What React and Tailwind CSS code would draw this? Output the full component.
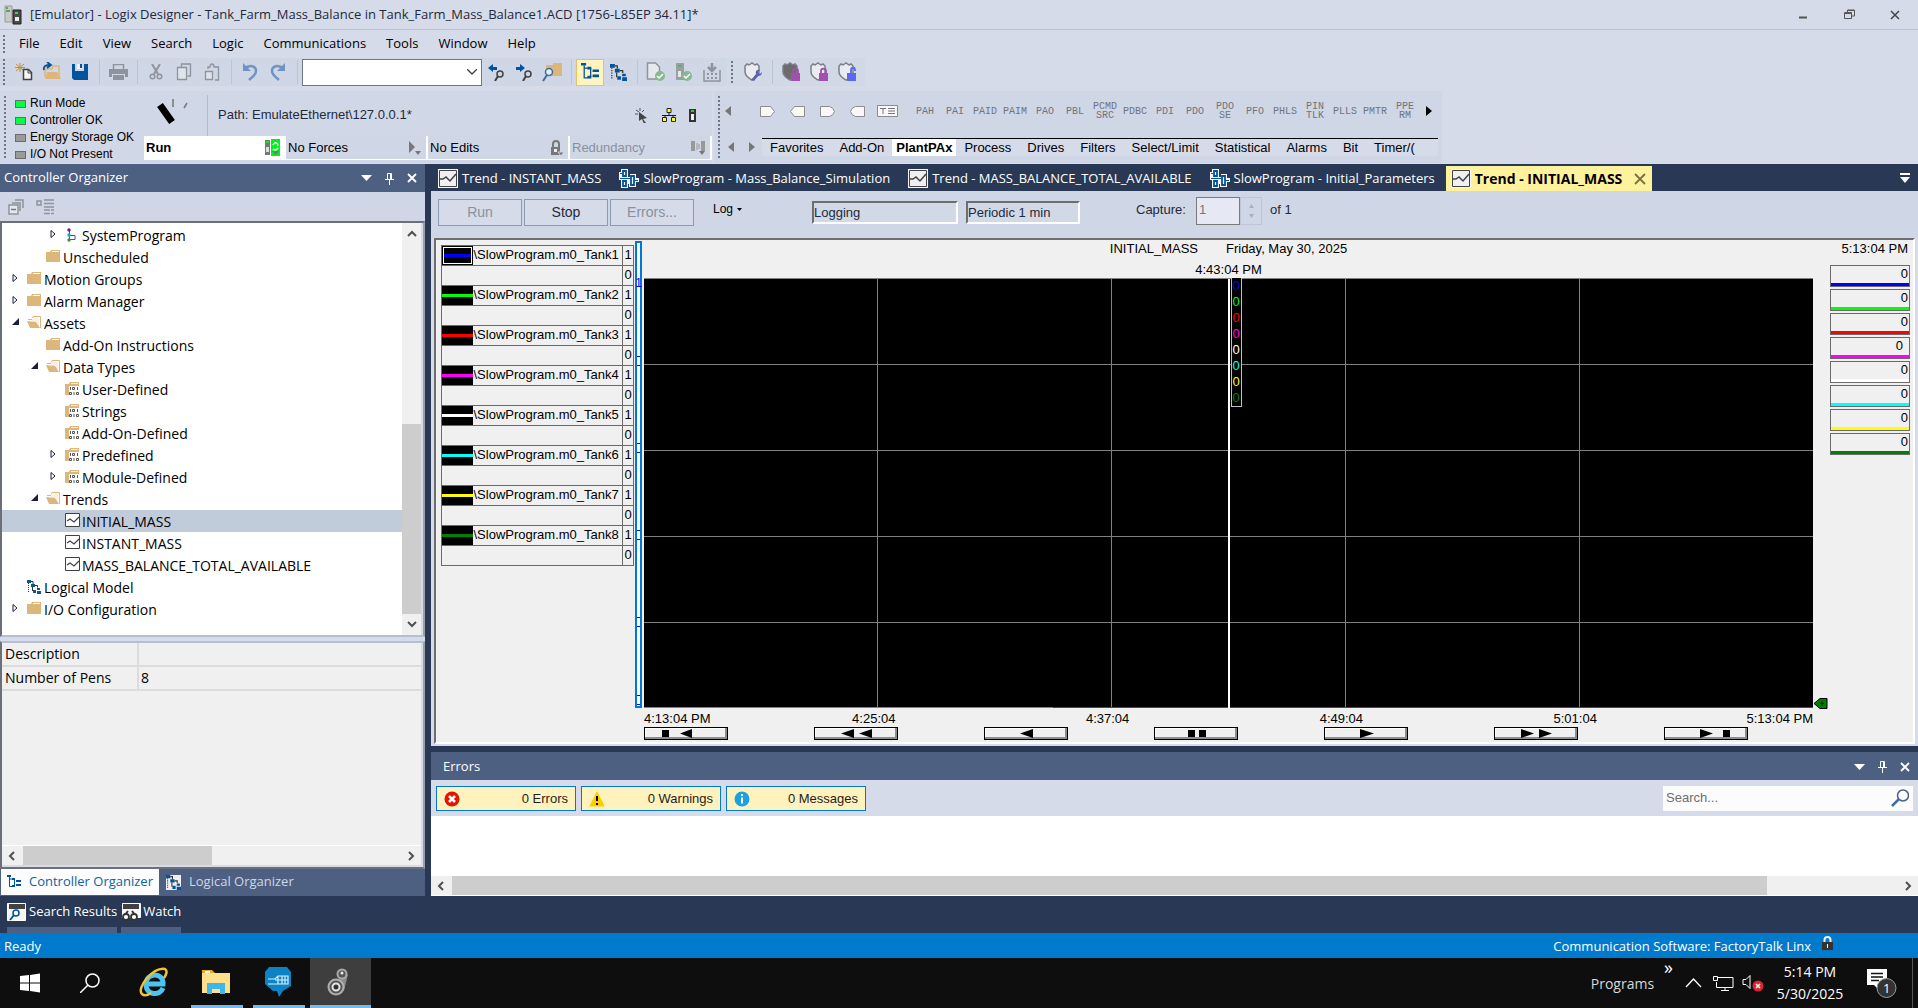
import React, { useState } from "react";
import clsx from "clsx";

const UI = "font-['Open_Sans',sans-serif]";
const ARIAL = "font-['Liberation_Sans',sans-serif]";

const PENS = [
  { color: "#0000ff", name: "Tank1" },
  { color: "#00ff00", name: "Tank2" },
  { color: "#ff0000", name: "Tank3" },
  { color: "#ff00ff", name: "Tank4" },
  { color: "#ffffff", name: "Tank5" },
  { color: "#00ffff", name: "Tank6" },
  { color: "#ffff00", name: "Tank7" },
  { color: "#008000", name: "Tank8" },
];

const TREE = [
  { level: 3, arrow: "closed", icon: "program", label: "SystemProgram" },
  { level: 2, icon: "folder", label: "Unscheduled" },
  { level: 1, arrow: "closed", icon: "folder", label: "Motion Groups" },
  { level: 1, arrow: "closed", icon: "folder", label: "Alarm Manager" },
  { level: 1, arrow: "open", icon: "open", label: "Assets" },
  { level: 2, icon: "folder", label: "Add-On Instructions" },
  { level: 2, arrow: "open", icon: "open", label: "Data Types" },
  { level: 3, icon: "types", label: "User-Defined" },
  { level: 3, icon: "types", label: "Strings" },
  { level: 3, icon: "types", label: "Add-On-Defined" },
  { level: 3, arrow: "closed", icon: "types", label: "Predefined" },
  { level: 3, arrow: "closed", icon: "types", label: "Module-Defined" },
  { level: 2, arrow: "open", icon: "open", label: "Trends" },
  { level: 3, icon: "trend", label: "INITIAL_MASS" },
  { level: 3, icon: "trend", label: "INSTANT_MASS" },
  { level: 3, icon: "trend", label: "MASS_BALANCE_TOTAL_AVAILABLE" },
  { level: 1, icon: "model", label: "Logical Model" },
  { level: 1, arrow: "closed", icon: "folder", label: "I/O Configuration" },
];

const INDENT = { 1: "pl-[7px]", 2: "pl-[26px]", 3: "pl-[45px]" };

const Ico = ({ w = 18, h = w, box = `0 0 ${w} ${h}`, className, children }) => (
  <svg
    width={w}
    height={h}
    viewBox={box}
    fill="none"
    aria-hidden="true"
    className={clsx("shrink-0", className)}
  >
    {children}
  </svg>
);

/* ---------- tree and tab icons ---------- */

const FolderIcon = () => (
  <Ico w={14} h={13}>
    <path d="M0 2h4l1-2h9v12H0z" fill="#dcb67a" />
    <path d="M6 1.500h7" stroke="#fff" />
  </Ico>
);

const OpenFolderIcon = () => (
  <Ico w={14} h={13}>
    <path d="M1 3.500h4l1-3h7.500V12" stroke="#dcb67a" />
    <path d="M5 2h7v9l-3-5H5z" fill="#f5f0e8" />
    <path d="M0 5l9 1 4 6H3z" fill="#dcb67a" />
  </Ico>
);

const TypesIcon = () => (
  <Ico w={14} h={14}>
    <path d="M0 2h4l1-2h9v4H4v9H0z" fill="#dcb67a" />
    <path d="M6 1.500h7" stroke="#f5ead6" />
    <path
      d="M5.500 5v3M7.500 5.500h2v2h-2zM12.500 5v3M4.500 10.500h2v2h-2zM9 10v3M11.500 10.500h2v2h-2z"
      stroke="#555"
      strokeWidth="1"
    />
  </Ico>
);

const TrendIcon = ({ size = 15 }) => (
  <Ico w={size} h={size} box="0 0 15 15">
    <path d="M.5.5h14v13H.5z" fill="#fff" stroke="#424242" />
    <path d="M2 8l3-2 4 3 5-5" stroke="#424242" strokeWidth="1.200" />
  </Ico>
);

const TabTrendIcon = () => (
  <Ico w={20} h={20}>
    <path d="M0 0h20v19H0z" fill="#f6f6f6" />
    <path d="M1.500 1.500h17v16h-17z" fill="#f0eff1" stroke="#424242" />
    <path d="M2 10h3l3-2 4 4 6-7" stroke="#424242" strokeWidth="1.500" />
  </Ico>
);

const ModelIcon = ({ c = "#0b5a7c", w = 14 }) => (
  <Ico w={w} h={w} box="0 0 14 14">
    <path d="M0 0h4v3H0zM4 4h4v3H4zM6 10h3v3H6zM10 8h3v2h-3zM10 11h4v3h-4z" fill={c} />
    <path d="M1.500 3v10" stroke="#333" strokeDasharray="1 1" />
    <path d="M4 1.500h2V4M8 5.500h2.500v2M5.500 7v4" stroke="#333" />
  </Ico>
);

const OrganizerIcon = ({ w = 14 }) => (
  <Ico w={w} h={w} box="0 0 14 14">
    <path d="M0 0h4v2H0zM5 3h3v2H5zM5 10h3v2H5zM9 5h5v2H9zM9 9h5v2H9z" fill="#00539c" />
    <path d="M2.500 2v9.500h3M2.500 4h3M7.500 4v7" stroke="#00539c" />
  </Ico>
);

const ProgramIcon = () => (
  <Ico w={14} h={14}>
    <path d="M4.500 2v10M5 7.500h5v4H5" stroke="#555" />
    <circle cx="4" cy="2" r="1.700" fill="#68217a" />
    <circle cx="4" cy="7" r="1.700" fill="#1ba1e2" />
    <circle cx="4" cy="12" r="1.700" fill="#339933" />
  </Ico>
);

const RoutineIcon = () => (
  <Ico w={20} h={20}>
    <path d="M0 3h2V0h7v8h2V5h6v4h3v4h-3v5h-7v-3H9v4H2v-8H0z" fill="#f6f6f6" />
    <path d="M4 2h3v5H4zM4 12h3v5H4zM12 7h3v9h-3z" fill="#fff" stroke="#00539c" strokeWidth="1.800" />
    <path d="M1 4.500h2M1 9.500h10M16 11.500h3" stroke="#00539c" />
  </Ico>
);

const TREE_ICONS = {
  program: <ProgramIcon />,
  folder: <FolderIcon />,
  open: <OpenFolderIcon />,
  types: <TypesIcon />,
  trend: <TrendIcon />,
  model: <ModelIcon />,
};

/* ---------- small shared parts ---------- */

const Grip = ({ className }) => (
  <div
    className={clsx(
      "w-[5px] shrink-0 bg-[radial-gradient(#6b7489_1px,transparent_1px)] bg-[size:4px_4px]",
      className
    )}
  />
);

const Sep = () => <div className="ml-[5px] mr-1 h-6 w-px shrink-0 bg-[#bcc4d4]" />;

const IconButton = ({ label, active, children }) => (
  <button
    type="button"
    aria-label={label}
    className={clsx(
      "flex h-[27px] w-7 shrink-0 items-center justify-center",
      active && "border border-[#e5c365] bg-[#fdf4bf]"
    )}
  >
    {children}
  </button>
);

const PanelButtons = () => (
  <div className="flex items-center gap-[3px]">
    <button type="button" aria-label="Window position" className="flex w-5 justify-center">
      <Ico w={11} h={6}>
        <path d="M0 0h11L5.500 6z" fill="#fff" />
      </Ico>
    </button>
    <button type="button" aria-label="Auto hide" className="flex w-5 justify-center">
      <Ico w={9} h={13}>
        <path d="M2.500 1.500h4v6h-4zM0 7.500h9M4.500 8v5M5.500 2v5" stroke="#fff" />
      </Ico>
    </button>
    <button type="button" aria-label="Close" className="flex w-5 justify-center">
      <Ico w={10} h={10}>
        <path d="M1 1l8 8M9 1L1 9" stroke="#fff" strokeWidth="1.800" />
      </Ico>
    </button>
  </div>
);

const Chevron = ({ d }) => (
  <Ico w={10} h={10}>
    <path d={d} stroke="#505050" strokeWidth="2" />
  </Ico>
);

const UP = "M1 7l4-4 4 4";
const DOWN = "M1 3l4 4 4-4";
const LEFT = "M7 1L3 5l4 4";
const RIGHT = "M3 1l4 4-4 4";

/* ---------- top bars ---------- */

const TitleBar = () => (
  <header className={clsx(UI, "flex h-[30px] items-center border-b border-[#bcc3d2] pl-1 text-[13px] text-[#1e2a3c]")}>
    <Ico w={18} h={20}>
      <path d="M1 1h7v16H1z" fill="#c8c8c8" stroke="#9a9a9a" />
      <path d="M2 3h2M2 6h4" stroke="#5aa85a" strokeWidth="2" />
      <path d="M9 5h8v14H9z" fill="#4a4a4a" stroke="#222" />
      <path d="M11 8h3" stroke="#2fe02f" strokeWidth="2" />
      <path d="M11 12h4v4h-4z" fill="#eee" />
    </Ico>
    <h1 className="ml-2 flex-1 whitespace-pre">
      [Emulator] - Logix Designer - Tank_Farm_Mass_Balance in Tank_Farm_Mass_Balance1.ACD [1756-L85EP 34.11]*
    </h1>
    <button type="button" aria-label="Minimize" className="flex w-[46px] justify-center">
      <Ico w={10} h={10}><path d="M1 7.500h8" stroke="#555" strokeWidth="2" /></Ico>
    </button>
    <button type="button" aria-label="Restore" className="flex w-[46px] justify-center">
      <Ico w={11} h={11}><path d="M.5 3.500h7v6h-7zM3.500 3V1h7v6H8M3 1.500h8M1 4.500h7" stroke="#555" /></Ico>
    </button>
    <button type="button" aria-label="Close" className="flex w-[46px] justify-center">
      <Ico w={10} h={10}><path d="M1 1l8 8M9 1L1 9" stroke="#444" strokeWidth="1.500" /></Ico>
    </button>
  </header>
);

const MENUS = ["File", "Edit", "View", "Search", "Logic", "Communications", "Tools", "Window", "Help"];

const MenuBar = () => (
  <nav className={clsx(UI, "flex h-7 items-center text-[13px] text-black")}>
    <Grip className="mx-[2px] h-5" />
    {MENUS.map((m) => (
      <button key={m} type="button" className="px-[10px]">
        {m}
      </button>
    ))}
  </nav>
);

const GREY = "#8f949c";

const Shield = ({ fill = "#e9ebf0", children }) => (
  <Ico w={20} h={20}>
    <path
      d="M2 4l2-2 2 1 3-2 3 2 2-1 2 2v6c0 4-4 6-7 8-3-2-7-4-7-8z"
      fill={fill}
      stroke="#7b7f88"
      strokeWidth="1.500"
    />
    {children}
  </Ico>
);

const Lock = ({ c, open }) => (
  <g>
    <path d="M10 11h9v8h-9z" fill={c} />
    <path d={open ? "M14 11V8c0-3 4-3 4 0v1" : "M12 11V9c0-3 5-3 5 0v2"} stroke={c} strokeWidth="1.800" />
  </g>
);

const ToolBar = () => (
  <div className="flex h-7 items-center">
    <div className="flex h-7 items-center bg-[#cfd6e5]">
      <Grip className="ml-[2px] mr-[3px] h-7" />
      <IconButton label="New">
        <Ico>
          <path d="M5 0v9M1 1l8 7M9 1L1 8M0 4.500h10" stroke="#c98b2b" />
          <path d="M8.500 6.500h5l3 3v7h-8z" fill="#f6f6f6" stroke="#424242" strokeWidth="1.500" />
          <path d="M13 6v4h4" stroke="#424242" />
        </Ico>
      </IconButton>
      <IconButton label="Open">
        <Ico w={20}>
          <path d="M3 15V7h7l1-3h6v12" stroke="#dcb67a" strokeWidth="1.500" />
          <path d="M5 10h10l4 7H3z" fill="#dcb67a" />
          <path d="M2 8c-1-4 2-5 6-5M5 0l4 3-4 3" stroke="#00539c" strokeWidth="1.800" />
        </Ico>
      </IconButton>
      <IconButton label="Save">
        <Ico w={16}>
          <path d="M0 0h3v7h9V0h4v16H2l-2-2z" fill="#00539c" />
          <path d="M5 0h5v5H5z" fill="#f0eff1" />
          <path d="M8 0h2v4H8z" fill="#00539c" />
        </Ico>
      </IconButton>
      <Sep />
      <IconButton label="Print">
        <Ico w={19} h={16}>
          <path d="M4.500 5V.5h10V5" stroke={GREY} strokeWidth="1.500" />
          <path d="M0 5h19v8h-3v-3H3v3H0z" fill={GREY} />
          <path d="M4 11h11v5H4z" fill={GREY} />
        </Ico>
      </IconButton>
      <Sep />
      <IconButton label="Cut">
        <Ico w={14} h={16}>
          <path d="M3 0l6 10M11 0L5 10" stroke={GREY} strokeWidth="2" />
          <circle cx="3.500" cy="12.500" r="2.300" stroke={GREY} strokeWidth="1.500" />
          <circle cx="10.500" cy="12.500" r="2.300" stroke={GREY} strokeWidth="1.500" />
        </Ico>
      </IconButton>
      <IconButton label="Copy">
        <Ico w={16} h={18}>
          <path d="M5.500 4V1h9v12h-3" stroke={GREY} strokeWidth="1.300" />
          <path d="M1.500 4.500h9v12h-9z" fill="#dfe3ea" stroke={GREY} strokeWidth="1.300" />
        </Ico>
      </IconButton>
      <IconButton label="Paste">
        <Ico w={16} h={18}>
          <path d="M4 6V4h2c0-4 4-4 4 0h4.500v13H11" stroke={GREY} strokeWidth="1.300" />
          <path d="M1.500 8.500h7v8h-7z" fill="#dfe3ea" stroke={GREY} strokeWidth="1.300" />
        </Ico>
      </IconButton>
      <Sep />
      <IconButton label="Undo">
        <Ico w={16} h={18}>
          <path d="M2 6c6-5 12-3 12 2 0 4-4 6-7 9" stroke="#6f93c4" strokeWidth="2.500" />
          <path d="M1 0v8h8z" fill="#6f93c4" />
        </Ico>
      </IconButton>
      <IconButton label="Redo">
        <Ico w={16} h={18}>
          <path d="M14 6C8 1 2 3 2 8c0 4 4 6 7 9" stroke="#6f93c4" strokeWidth="2.500" />
          <path d="M15 0v8H7z" fill="#6f93c4" />
        </Ico>
      </IconButton>
      <Sep />
      <div className="relative flex h-[27px] w-[180px] items-center border border-[#6f7787] bg-white">
        <select aria-label="Search for" className="h-full w-full appearance-none bg-transparent text-[13px] outline-none">
          <option></option>
        </select>
        <Ico w={10} h={6} className="pointer-events-none absolute right-1"><path d="M0 0l5 5 5-5" stroke="#444" strokeWidth="1.300" /></Ico>
      </div>
      <IconButton label="Find previous">
        <Ico w={17}>
          <path d="M0 4l5-4v3h4v3H5v2z" fill="#00539c" />
          <circle cx="12" cy="10" r="3" stroke="#424242" strokeWidth="1.500" />
          <path d="M10 12l-3 5" stroke="#424242" strokeWidth="2" />
        </Ico>
      </IconButton>
      <IconButton label="Find next">
        <Ico w={17}>
          <path d="M9 4L4 0v3H0v3h4v2z" fill="#00539c" />
          <circle cx="12" cy="10" r="3" stroke="#424242" strokeWidth="1.500" />
          <path d="M10 12l-3 5" stroke="#424242" strokeWidth="2" />
        </Ico>
      </IconButton>
      <IconButton label="Find in files">
        <Ico w={20} h={19}>
          <path d="M4 2h7V0h9v13H4z" fill="#dcb67a" />
          <circle cx="7" cy="9" r="3.500" fill="#e8eef6" stroke="#3a6ea5" strokeWidth="1.500" />
          <path d="M5 12l-4 6" stroke="#3a6ea5" strokeWidth="2" />
        </Ico>
      </IconButton>
      <Sep />
      <IconButton label="Controller organizer" active>
        <OrganizerIcon w={18} />
      </IconButton>
      <IconButton label="Logical organizer">
        <ModelIcon c="#00539c" w={17} />
      </IconButton>
      <Sep />
      <IconButton label="Verify routine">
        <Ico w={20}>
          <path d="M1.500 1h8l4 4v12h-12z" fill="#e6e8ec" stroke={GREY} strokeWidth="1.500" />
          <circle cx="14" cy="14" r="5" fill="#86b98e" />
          <path d="M11 14l2 2 4-4" stroke="#fff" strokeWidth="1.500" />
        </Ico>
      </IconButton>
      <IconButton label="Verify controller">
        <Ico w={20}>
          <path d="M2 1h8v17H2z" fill="#9a9fa6" />
          <path d="M4 4h4" stroke="#54b85c" strokeWidth="2" />
          <path d="M4 9h3v6H4z" fill="#e6e8ec" />
          <circle cx="13" cy="14" r="5" fill="#86b98e" />
          <path d="M10 14l2 2 4-4" stroke="#fff" strokeWidth="1.500" />
        </Ico>
      </IconButton>
      <IconButton label="Download">
        <Ico w={18} h={19}>
          <path d="M9 0v6M5 4l4 4 4-4" stroke={GREY} strokeWidth="2.500" />
          <path d="M1 7v11h16V7" stroke={GREY} strokeWidth="1.500" />
          <path d="M4 11h10M4 15h10" stroke={GREY} strokeWidth="2" strokeDasharray="2 2" />
        </Ico>
      </IconButton>
    </div>
    <div className="flex h-7 items-center bg-[#d1d8e6] pr-1">
      <Grip className="ml-1 mr-1 h-6" />
      <IconButton label="Security configuration">
        <Shield><path d="M8 18l5-6c-1-3 1-5 4-4l-2 2 2 2 2-2c0 3-2 4-4 4l-4 5z" fill="#5c62ad" /></Shield>
      </IconButton>
      <Sep />
      <IconButton label="Protect all">
        <Shield fill="#6b6b6b"><Lock c="#a24fb0" /></Shield>
      </IconButton>
      <IconButton label="Protect">
        <Shield><Lock c="#a24fb0" /></Shield>
      </IconButton>
      <IconButton label="Unlock">
        <Shield><Lock c="#5a68f0" open /></Shield>
      </IconButton>
    </div>
  </div>
);

const LEDS = [
  { on: true, label: "Run Mode" },
  { on: true, label: "Controller OK" },
  { on: false, label: "Energy Storage OK" },
  { on: false, label: "I/O Not Present" },
];

const StatusField = ({ label, bold, faded, children }) => (
  <button
    type="button"
    className={clsx(
      "flex h-6 flex-1 items-center justify-between border-r-2 border-b border-white pl-[2px] pr-1 text-left text-[13px]",
      bold ? "bg-white font-bold text-black" : "bg-[#cfd6e5]",
      faded ? "text-[#8a909c]" : "text-black"
    )}
  >
    {label}
    {children}
  </button>
);

const OnlineBar = () => (
  <div className={clsx(ARIAL, "flex w-[712px] shrink-0 bg-[#d0d7e6]")}>
    <Grip className="mx-[3px] my-1 self-stretch" />
    <ul className="flex w-[133px] flex-col pl-1 pt-1 text-[12px] leading-[17px] text-black">
      {LEDS.map((l) => (
        <li key={l.label} className="flex items-center gap-1 whitespace-nowrap">
          <span
            className={clsx(
              "h-2 w-[11px] border border-[#6b6b6b]",
              l.on ? "bg-[#00ff40]" : "bg-[#9a9a9a]"
            )}
          />
          {l.label}
        </li>
      ))}
    </ul>
    <div className="flex flex-1 flex-col justify-between pb-[3px]">
      <div className="flex h-[45px] items-end">
        <div className="flex h-[41px] w-16 items-start border-r border-[#b4bccb] pl-3 pt-1">
          <Ico w={36} h={28}>
            <path d="M4 6l12 17" stroke="#000" strokeWidth="7" />
            <path d="M17 0v8M31 4l-3 5" stroke="#777" strokeWidth="1.500" />
          </Ico>
        </div>
        <span className="ml-[10px] flex-1 text-[13px] leading-[42px] text-[#1e2a3c]">
          Path: EmulateEthernet\127.0.0.1*
        </span>
        <div className="flex h-[42px] w-[77px] items-center gap-[13px]">
          <button type="button" aria-label="Who active">
            <Ico w={14} h={15}>
              <path d="M5 0v3M1 2l3 2M9 2L7 4M0 6h3" stroke="#555" />
              <path d="M4 4l8 6-4 1 3 4-2 1-2-5-3 2z" fill="#444" />
            </Ico>
          </button>
          <button type="button" aria-label="RSWho">
            <Ico w={14} h={14}>
              <path d="M7 4v3M0 7.500h14M3 8v2M11 8v2" stroke="#0000c0" />
              <path d="M5 .5h4v4H5zM.5 9.500h4v4h-4zM9.500 9.500h4v4h-4z" fill="#ff0" stroke="#222" />
            </Ico>
          </button>
          <button type="button" aria-label="Controller">
            <Ico w={7} h={13}>
              <path d="M0 0h7v13H0z" fill="#333" />
              <path d="M2 2h3" stroke="#3c3" strokeWidth="2" />
              <path d="M2 5h3v6H2z" fill="#eee" />
            </Ico>
          </button>
        </div>
      </div>
      <div className="flex">
        <StatusField label="Run" bold>
          <Ico w={16} h={17}>
            <path d="M7 0h9v17H7z" fill="#00f020" />
            <path d="M1 1h5v15H1z" fill="#777" />
            <path d="M2 3h3" stroke="#2d2" strokeWidth="2" />
            <path d="M2 8h3v5H2z" fill="#ddd" />
            <path d="M9 6c2-4 5-2 5 1M14 9c-2 3-4 2-5 1" stroke="#fff" strokeWidth="1.500" />
            <path d="M8 12h7l-3 4z" fill="#777" />
          </Ico>
        </StatusField>
        <StatusField label="No Forces">
          <Ico w={14} h={14}>
            <path d="M1 0l6 6-6 6zM7 10h6l-3 4z" fill="#777" />
          </Ico>
        </StatusField>
        <StatusField label="No Edits">
          <Ico w={14} h={16}>
            <path d="M1 7h9v8H1z" fill="#777" />
            <path d="M3 7V4c0-4 6-4 6 0v3" stroke="#777" strokeWidth="2" />
            <path d="M4 9h3v3H4z" fill="#eee" />
            <path d="M8 12h6l-3 4z" fill="#777" stroke="#cfd6e5" />
          </Ico>
        </StatusField>
        <StatusField label="Redundancy" faded>
          <Ico w={16} h={14}>
            <path d="M1 0h4v10H1zM11 0h4v10h-4z" fill="#999" />
            <path d="M7 2v7M9 3v5" stroke="#999" />
            <path d="M9 10h6l-3 4z" fill="#777" />
          </Ico>
        </StatusField>
      </div>
    </div>
  </div>
);

const BLOCKS = [
  "PAH", "PAI", "PAID", "PAIM", "PAO", "PBL", "PCMD SRC", "PDBC", "PDI", "PDO",
  "PDO SE", "PFO", "PHLS", "PIN TLK", "PLLS", "PMTR", "PPE RM",
];

const GROUPS = [
  "Favorites", "Add-On", "PlantPAx", "Process", "Drives", "Filters",
  "Select/Limit", "Statistical", "Alarms", "Bit", "Timer/(",
];

const SHAPES = [
  "M1.500 2.500h10l4 5-4 5h-10z",
  "M15.500 2.500h-10l-4 5 4 5h10z",
  "M1.500 2.500h9q4 1 5 5-1 4-5 5h-9z",
  "M15.500 2.500h-9q-4 1-5 5 1 4 5 5h9z",
];

const Triangle = ({ left, c = "#777" }) => (
  <Ico w={6} h={10}>
    <path d={left ? "M6 0v10L0 5z" : "M0 0v10l6-5z"} fill={c} />
  </Ico>
);

const InstructionBar = () => {
  const [group, setGroup] = useState("PlantPAx");

  return (
    <div className={clsx(ARIAL, "flex w-[728px] shrink-0 bg-[#cfd6e5]")}>
      <Grip className="my-1 ml-[3px] mr-[2px] self-stretch" />
      <div className="flex min-w-0 flex-1 flex-col pr-1">
        <div className="flex h-10 items-center">
          <button type="button" aria-label="Scroll left" className="w-7 shrink-0 pl-px"><Triangle left /></button>
          {SHAPES.map((d) => (
            <button key={d} type="button" aria-label="Reference" className="flex w-[30px] shrink-0 justify-center">
              <Ico w={17} h={15}>
                <path d={d} fill="#f8f8f8" stroke="#8c8c8c" />
              </Ico>
            </button>
          ))}
          <button type="button" aria-label="Text box" className="mr-2 flex w-[30px] shrink-0 justify-center">
            <Ico w={21} h={14}>
              <path d="M.5 1.500h20v11H.5z" fill="#f8f8f8" stroke="#8c8c8c" />
              <path d="M3 4.500h6M6 4v6M11 4.500h7M11 7h7M11 9.500h7" stroke="#777" />
            </Ico>
          </button>
          {BLOCKS.map((b) => (
            <button
              key={b}
              type="button"
              className="w-[30px] shrink-0 text-center font-['Liberation_Mono',monospace] text-[10px] leading-[9px] text-[#6f747d]"
            >
              {b}
            </button>
          ))}
          <button type="button" aria-label="Scroll right" className="pl-[6px]"><Triangle c="#000" /></button>
        </div>
        <div className="mt-[7px] flex h-[18px] items-center">
          <button type="button" aria-label="Previous group" className="pl-1"><Triangle left /></button>
          <button type="button" aria-label="Next group" className="pl-[15px] pr-[7px]"><Triangle /></button>
          <div role="tablist" className="flex h-full flex-1 border-t border-black bg-[#d5dbe9]">
            {GROUPS.map((g) => (
              <button
                key={g}
                type="button"
                role="tab"
                aria-selected={g === group}
                onClick={() => setGroup(g)}
                className={clsx(
                  "whitespace-nowrap text-[13px] leading-[17px] text-black",
                  g === group ? "bg-white px-1 font-bold" : "px-2 last:pr-0"
                )}
              >
                {g}
              </button>
            ))}
          </div>
        </div>
      </div>
    </div>
  );
};

/* ---------- left panel ---------- */

const Organizer = () => {
  const [selected, setSelected] = useState("INITIAL_MASS");

  return (
    <aside className={clsx(UI, "flex w-[425px] shrink-0 flex-col bg-[#d5dbe9]")}>
      <div className="flex h-7 shrink-0 items-center justify-between bg-[#4d6082] pl-1 pr-[3px] text-[13px] text-white">
        <h2>Controller Organizer</h2>
        <PanelButtons />
      </div>
      <div className="flex h-[29px] shrink-0 items-center gap-3 bg-[#cfd6e5] pl-2">
        <button type="button" aria-label="Collapse all">
          <Ico w={16}>
            <path d="M1 6h9v9H1z" fill="#e6e8ec" stroke="#8f949c" strokeWidth="1.500" />
            <path d="M3 10.500h5" stroke="#5c7ca8" strokeWidth="1.500" />
            <path d="M4 4h8v8M7 1h8v8" stroke="#8f949c" strokeWidth="1.500" />
          </Ico>
        </button>
        <button type="button" aria-label="Properties">
          <Ico w={18} h={16}>
            <path d="M1 2h4v4H1z" stroke="#8f949c" strokeWidth="1.500" />
            <path d="M8 1h10M8 4.500h10M8 8h10M8 11h6M8 14.500h6M15 11h3M15 14.500h3" stroke="#8f949c" strokeWidth="1.500" />
          </Ico>
        </button>
      </div>

      <div className="flex shrink-0 border-2 border-t-[#6a6f78] border-r-[#9aa0ab] border-b-[#b8bfcc] border-l-[#6a6f78] pr-[2px]">
        <ul className="flex-1 bg-white pb-[15px] pt-px">
          {TREE.map((node) => (
            <li key={node.label}>
              <button
                type="button"
                onClick={() => setSelected(node.label)}
                className={clsx(
                  "flex h-[22px] w-full items-center whitespace-nowrap text-[14px] text-black",
                  INDENT[node.level],
                  node.label === selected && "bg-[#c0ccda]"
                )}
              >
                <span className="flex w-[18px] items-center pb-[3px] pl-[3px]">
                  {node.arrow === "closed" && (
                    <Ico w={6} h={10}><path d="M1 1.500v7L5 5z" stroke="#1e1e3c" /></Ico>
                  )}
                  {node.arrow === "open" && (
                    <Ico w={7} h={7}><path d="M7 0v7H0z" fill="#1e1e3c" /></Ico>
                  )}
                </span>
                <span className="mr-[3px] w-[14px] pb-px">{TREE_ICONS[node.icon]}</span>
                {node.label}
              </button>
            </li>
          ))}
        </ul>
        <div className="flex w-[19px] flex-col items-center justify-between bg-[#f0f0f0] py-[6px]">
          <Chevron d={UP} />
          <div className="flex w-full flex-1 flex-col justify-end pb-[5px]">
            <div className="h-[190px] bg-[#cdcdcd]" />
          </div>
          <Chevron d={DOWN} />
        </div>
      </div>

      <div className="mt-1 flex flex-1 flex-col border-2 border-t-[#b8bfcc] border-r-[#9aa0ab] border-b-[#6a6f78] border-l-[#6a6f78] pb-[2px] pr-[2px]">
        <div className="flex flex-1 flex-col bg-[#f0f0f0]">
          <table className="w-full border-collapse text-[14px] leading-[22px] text-black">
            <tbody>
              <tr className="border-b-2 border-[#dcdcdc]">
                <th scope="row" className="w-[136px] border-r-2 border-[#dcdcdc] pl-[3px] text-left font-normal">Description</th>
                <td className="pl-1"></td>
              </tr>
              <tr className="border-b-2 border-[#dcdcdc]">
                <th scope="row" className="border-r-2 border-[#dcdcdc] pl-[3px] text-left font-normal">Number of Pens</th>
                <td className="pl-[2px]">8</td>
              </tr>
            </tbody>
          </table>
          <div className="mt-auto flex h-5 items-center border-t border-white px-[5px]">
            <Chevron d={LEFT} />
            <div className="flex h-full flex-1 px-[6px]">
              <div className="h-full w-1/2 bg-[#cdcdcd]" />
            </div>
            <Chevron d={RIGHT} />
          </div>
        </div>
      </div>

      <div className="flex h-[27px] shrink-0 items-start bg-[#4d6082] pl-px text-[13px]">
        <button type="button" className="flex h-[26px] items-center gap-2 bg-[#fcfcfc] px-[6px] text-[#0e639c]">
          <OrganizerIcon w={14} />
          Controller Organizer
        </button>
        <button type="button" className="flex h-[26px] items-center gap-2 px-[7px] text-[#d0d7e6]">
          <span className="bg-white/90"><ModelIcon c="#00539c" w={15} /></span>
          Logical Organizer
        </button>
      </div>
    </aside>
  );
};

/* ---------- trend ---------- */

const DOC_TABS = [
  { type: "trend", label: "Trend - INSTANT_MASS" },
  { type: "routine", label: "SlowProgram - Mass_Balance_Simulation" },
  { type: "trend", label: "Trend - MASS_BALANCE_TOTAL_AVAILABLE" },
  { type: "routine", label: "SlowProgram - Initial_Parameters" },
];

const DocTabs = () => (
  <div className={clsx(UI, "flex h-[27px] shrink-0 items-end bg-[#293955] text-[13px] text-white")}>
    {DOC_TABS.map((t) => (
      <button key={t.label} type="button" className="flex h-[25px] items-center gap-1 whitespace-nowrap pl-[7px] pr-[11px]">
        {t.type === "trend" ? <TabTrendIcon /> : <RoutineIcon />}
        {t.label}
      </button>
    ))}
    <div className="flex h-[25px] items-center bg-[#fff29d] pl-[5px] pr-[6px] text-black">
      <button type="button" className="flex items-center gap-1 whitespace-nowrap text-[14px] font-bold">
        <TabTrendIcon />
        Trend - INITIAL_MASS
      </button>
      <button type="button" aria-label="Close tab" className="ml-3">
        <Ico w={12}><path d="M1 1l10 10M11 1L1 11" stroke="#7a7048" strokeWidth="1.800" /></Ico>
      </button>
    </div>
    <button type="button" aria-label="Open documents" className="ml-auto self-center pr-2">
      <Ico w={10} h={10}>
        <path d="M0 1h10" stroke="#fff" strokeWidth="2" />
        <path d="M0 4h10L5 10z" fill="#fff" />
      </Ico>
    </button>
  </div>
);

const TREND_BUTTON = "h-[27px] w-[84px] border border-[#8b9bb0] bg-[#d5dbe9] text-[14px]";
const SUNKEN =
  "h-[23px] border-2 border-t-[#6e6e6e] border-r-white border-b-white border-l-[#6e6e6e] bg-[#d1d8e6] text-[13px] text-[#1e2a3c] outline-none";

const TrendToolbar = () => (
  <div className={clsx(ARIAL, "flex h-[47px] shrink-0 items-start bg-[#cfd6e5] pl-[7px] pt-2 text-[13px] text-[#1e2a3c]")}>
    <div className="flex gap-[2px]">
      <button type="button" disabled className={clsx(TREND_BUTTON, "text-[#8a909c]")}>Run</button>
      <button type="button" className={TREND_BUTTON}>Stop</button>
      <button type="button" disabled className={clsx(TREND_BUTTON, "text-[#8a909c]")}>Errors...</button>
    </div>
    <button type="button" className="ml-[19px] flex w-[99px] items-center gap-1 text-[12px] leading-5 text-black">
      Log
      <Ico w={5} h={3}><path d="M0 0h5L2.500 3z" fill="#000" /></Ico>
    </button>
    <input aria-label="Trend status" readOnly defaultValue="Logging" className={clsx(SUNKEN, "mt-[2px] w-[146px]")} />
    <input aria-label="Sample mode" readOnly defaultValue="Periodic 1 min" className={clsx(SUNKEN, "mt-[2px] ml-2 w-[114px]")} />
    <label htmlFor="capture" className="ml-14 mt-[3px] w-[60px] leading-4">Capture:</label>
    <input
      id="capture"
      defaultValue="1"
      className="-mt-[2px] h-7 w-11 border border-[#7a7a7a] bg-[#e6e9f3] pb-1 pl-[2px] text-[13px] text-[#777] outline-none"
    />
    <div className="-mt-[2px] flex h-7 w-[22px] flex-col items-center justify-evenly border border-[#bfc5d2]">
      <Ico w={5} h={4}><path d="M0 4h5L2.500 0z" fill="#aab0bb" /></Ico>
      <Ico w={5} h={4}><path d="M0 0h5L2.500 4z" fill="#aab0bb" /></Ico>
    </div>
    <span className="ml-2 mt-[3px] leading-4">of 1</span>
  </div>
);

const PenTable = () => (
  <table className="w-[193px] border-collapse border border-[#6a6a6a] text-[13px] leading-[18px] text-black">
    <tbody>
      {PENS.map((pen, i) => (
        <React.Fragment key={pen.name}>
          <tr className="h-5 border-b border-[#6a6a6a] align-top">
            <td className="w-[31px] bg-black p-0">
              <div className={clsx("flex items-center", i === 0 ? "m-px h-[17px] border border-white" : "h-[19px]")}>
                <div className="h-[3px] w-full" style={{ background: pen.color }} />
              </div>
            </td>
            <td className="whitespace-nowrap p-0 pl-px">\SlowProgram.m0_{pen.name}</td>
            <td className="w-[11px] border-l border-[#6a6a6a] p-0 text-center">1</td>
          </tr>
          <tr className="h-5 border-b border-[#6a6a6a] align-top">
            <td colSpan={2} className="p-0" />
            <td className="border-l border-[#6a6a6a] p-0 text-center">0</td>
          </tr>
        </React.Fragment>
      ))}
    </tbody>
  </table>
);

const GRID = ["20%", "40%", "60%", "80%"];
const TICKS = ["4:25:04", "4:37:04", "4:49:04", "5:01:04"];

const PLAYBACK = [
  { label: "Go to start", d: "M17 3h7v7h-7zM47 2v9L35 6.500z" },
  { label: "Fast back", d: "M39 2v9L26 6.500zM57 2v9L44 6.500z" },
  { label: "Back", d: "M48 2v9L35 6.500z" },
  { label: "Pause", d: "M33 3h7v7h-7zM44 3h7v7h-7z" },
  { label: "Forward", d: "M35 2v9l14-4.500z" },
  { label: "Fast forward", d: "M26 2v9l13-4.500zM44 2v9l13-4.500z" },
  { label: "Go to end", d: "M35 2v9l13-4.500zM58 3h7v7h-7z" },
];

const Plot = () => (
  <div className="flex min-w-0 flex-1 flex-col">
    <div className="flex h-[18px] items-center justify-center gap-7">
      <span>INITIAL_MASS</span>
      <span>Friday, May 30, 2025</span>
    </div>
    <div className="h-5 text-center leading-6">4:43:04 PM</div>
    <div className="relative flex-1 border-t border-[#808080] bg-black">
      <svg width="100%" height="100%" className="absolute inset-0" aria-hidden="true">
        {GRID.map((p) => (
          <g key={p} stroke="#808080" shapeRendering="crispEdges">
            <line x1={p} x2={p} y1="0" y2="100%" />
            <line x1="0" x2="100%" y1={p} y2={p} />
          </g>
        ))}
        <line x1="0" x2="35%" y1="100%" y2="100%" stroke="#808080" strokeWidth="2" />
        <line x1="35%" x2="100%" y1="100%" y2="100%" stroke="#008000" strokeWidth="2" />
        <line x1="50%" x2="50%" y1="0" y2="100%" stroke="#fff" strokeWidth="2" shapeRendering="crispEdges" />
      </svg>
      <ul className="absolute -top-px left-1/2 ml-[2px] w-[11px] border border-t-0 border-[#c0c0c0] bg-black text-center text-[13px] leading-4">
        {PENS.map((pen) => (
          <li key={pen.name} style={{ color: pen.color }}>0</li>
        ))}
      </ul>
    </div>
    <div className="flex h-[19px] shrink-0 items-end leading-4">
      {["4:13:04 PM", ...TICKS].map((t, i) => (
        <div key={t} className="flex flex-1 justify-between">
          <span>{i === 0 ? t : ""}</span>
          {i < TICKS.length ? (
            <span className="mr-1 flex w-0 justify-center whitespace-nowrap">{TICKS[i]}</span>
          ) : (
            <span>5:13:04 PM</span>
          )}
        </div>
      ))}
    </div>
    <div className="mb-[2px] flex shrink-0 justify-between pr-[65px]">
      {PLAYBACK.map((b) => (
        <button
          key={b.label}
          type="button"
          aria-label={b.label}
          className="h-[13px] w-[84px] border border-black bg-[#f0f0f0] shadow-[inset_-2px_-2px_0_#8c8c8c,inset_1px_1px_0_#fff]"
        >
          <Ico w={82} h={11} box="0 1 82 11"><path d={b.d} fill="#000" /></Ico>
        </button>
      ))}
    </div>
  </div>
);

const ValueColumn = () => (
  <div className="flex w-[97px] shrink-0 flex-col text-right">
    <div className="h-[25px] pr-[2px] leading-[18px]">5:13:04 PM</div>
    <ul className="ml-[17px] flex flex-col gap-[2px]">
      {PENS.map((pen) => (
        <li key={pen.name} className="flex h-[22px] flex-col justify-between border border-[#6a6a6a] leading-4">
          <span className={pen.name === "Tank4" ? "pr-[6px]" : "pr-px"}>0</span>
          <span className="h-[3px] w-full shrink-0" style={{ background: pen.color }} />
        </li>
      ))}
    </ul>
    <Ico w={15} h={11} className="mb-[33px] mt-auto">
      <path d="M1 5.500L7 .5h7v10H7z" fill="#008000" stroke="#000" />
      <path d="M7 5.500h4M9 3.500v4" stroke="#000" />
    </Ico>
  </div>
);

const ScaleSlider = () => (
  <div className="mb-[34px] ml-px mr-[2px] mt-px flex w-[7px] flex-col border-2 border-[#0078d7] bg-white pb-px">
    <span className="flex h-[113px] shrink-0 justify-center pt-8 text-[12px] leading-4 text-[#0000ff]">1</span>
    {[0, 1, 2, 3, 4].map((n) => (
      <React.Fragment key={n}>
        {n > 0 && <div className={n === 4 ? "flex-[7]" : "flex-[8]"} />}
        <div className="h-[10px] shrink-0 border-y border-[#0000ff]" />
      </React.Fragment>
    ))}
  </div>
);

const TrendView = () => (
  <section className="flex min-h-0 flex-1 bg-[#d5dbe9] pb-[2px] pl-[3px] pr-[3px]">
    <div
      className={clsx(
        ARIAL,
        "flex flex-1 border-2 border-t-[#6e6e6e] border-r-white border-b-white border-l-[#6e6e6e] bg-[#f0f0f0] pl-[5px] pr-[3px] text-[13px] text-black"
      )}
    >
      <div className="pt-[5px]"><PenTable /></div>
      <ScaleSlider />
      <Plot />
      <ValueColumn />
    </div>
  </section>
);

/* ---------- errors ---------- */

const MESSAGE_TYPES = [
  {
    label: "0 Errors",
    icon: (
      <Ico w={16}>
        <circle cx="8" cy="8" r="7.500" fill="#e51400" />
        <path d="M5 5l6 6M11 5l-6 6" stroke="#fff" strokeWidth="2.500" />
      </Ico>
    ),
  },
  {
    label: "0 Warnings",
    icon: (
      <Ico w={16}>
        <path d="M8 1l7 14H1z" fill="#fc0" stroke="#fc0" />
        <path d="M8 5v5M8 12v2" stroke="#000" strokeWidth="2" />
      </Ico>
    ),
  },
  {
    label: "0 Messages",
    icon: (
      <Ico w={16}>
        <circle cx="8" cy="8" r="7.500" fill="#1ba1e2" />
        <path d="M8 3v2M8 6.500v6" stroke="#fff" strokeWidth="2" />
      </Ico>
    ),
  },
];

const ErrorsPanel = () => (
  <section className="mt-[6px] shrink-0">
    <div className={clsx(UI, "flex h-7 items-center justify-between bg-[#4d6082] pl-3 pr-[3px] pt-px text-[13px] text-white")}>
      <h2>Errors</h2>
      <PanelButtons />
    </div>
    <div className={clsx(ARIAL, "flex h-9 items-center gap-[5px] bg-[#d5dbe9] px-[5px]")}>
      {MESSAGE_TYPES.map((m) => (
        <button
          key={m.label}
          type="button"
          className="flex h-[25px] w-[140px] items-center justify-between border border-[#007acc] bg-[#fff2bc] px-[7px] pt-px text-[13px] text-[#1e1e1e]"
        >
          {m.icon}
          {m.label}
        </button>
      ))}
      <div className="ml-auto flex h-[25px] w-[250px] items-center bg-[#fcfcfc] pl-[3px] pr-1">
        <input
          type="search"
          aria-label="Search"
          placeholder="Search..."
          className="min-w-0 flex-1 bg-transparent text-[13px] outline-none placeholder:text-[#6d6d6d]"
        />
        <Ico w={18} h={18}>
          <circle cx="12" cy="6.500" r="5.500" stroke="#4d6082" strokeWidth="1.500" />
          <path d="M8 10l-7 7" stroke="#3f6bb0" strokeWidth="2.500" />
        </Ico>
      </div>
    </div>
    <div className="h-[60px] bg-white" />
    <div className="flex h-5 items-center border-b border-white bg-[#f0f0f0] px-[5px]">
      <Chevron d={LEFT} />
      <div className="flex h-full flex-1 px-[6px]">
        <div className="h-full w-[91%] bg-[#cdcdcd]" />
      </div>
      <Chevron d={RIGHT} />
    </div>
  </section>
);

/* ---------- bottom bars ---------- */

const DockedTabs = () => (
  <div className={clsx(UI, "flex h-[37px] shrink-0 items-stretch gap-1 pl-[7px] text-[13px] text-white")}>
    <button type="button" className="flex items-center gap-[2px] border-b-6 border-[#4d6082]">
      <Ico w={20}>
        <path d="M.5 1.500h18v17H.5z" fill="#f6f6f6" stroke="#fff" />
        <path d="M2 2h16v5H2z" fill="#424242" />
        <circle cx="9" cy="11" r="3" stroke="#00539c" strokeWidth="1.500" />
        <path d="M7 13l-4 5" stroke="#00539c" strokeWidth="2" />
      </Ico>
      Search Results
    </button>
    <button type="button" className="flex items-center gap-[2px] border-b-6 border-[#4d6082]">
      <Ico w={20}>
        <path d="M1.500 1.500h18v14h-18z" fill="#f6f6f6" stroke="#fff" />
        <path d="M2 2h16v5H2z" fill="#424242" />
        <path d="M3 14l4-5M15 14l-4-5" stroke="#333" strokeWidth="2" />
        <circle cx="5" cy="15" r="3" fill="#fff" stroke="#333" strokeWidth="1.800" />
        <circle cx="13" cy="15" r="3" fill="#fff" stroke="#333" strokeWidth="1.800" />
      </Ico>
      Watch
    </button>
  </div>
);

const StatusBar = () => (
  <div className={clsx(UI, "flex h-[25px] shrink-0 items-center justify-between bg-[#007acc] pl-1 pt-[2px] text-[13px] text-white")}>
    <span>Ready</span>
    <span className="flex items-center gap-[11px] pr-[85px]">
      Communication Software: FactoryTalk Linx
      <Ico w={11} h={14} className="mb-2">
        <path d="M2.500 6V4c0-4 6-4 6 0v2" stroke="#f0f0f0" strokeWidth="2" />
        <path d="M0 6h11v8H0z" fill="#333" />
        <path d="M5 8h1v4H5z" fill="#fff" />
      </Ico>
    </span>
  </div>
);

const APPS = [
  {
    label: "Internet Explorer",
    icon: (
      <Ico w={30} h={30}>
        <path d="M24 21c-3 8-17 8-17-4C7 5 25 5 24 17H9" stroke="#4cc3f0" strokeWidth="5" />
        <path d="M3 27C-3 21 14 0 26 2c3 2 1 6-1 9M3 27c2 2 6 1 9-1" stroke="#f2c230" strokeWidth="2.500" />
      </Ico>
    ),
  },
  {
    label: "File Explorer",
    running: true,
    icon: (
      <Ico w={28} h={24}>
        <path d="M0 0h10l3 3H0z" fill="#e8a92c" />
        <path d="M0 3h28v20H0z" fill="#ffe08a" />
        <path d="M3 1h5v2H3z" fill="#fff" />
        <path d="M5 13h18v11h-5v-5h-8v5H5z" fill="#3db7ea" />
      </Ico>
    ),
  },
  {
    label: "FactoryTalk",
    running: true,
    icon: (
      <Ico w={26} h={30}>
        <path d="M4 0h18l4 5v14l-8 5-4 6-2-6H8L0 17V5z" fill="#0d83c4" />
        <path d="M3 17h20V9H13L10 12H3M13 9v8M10 13h13M17 9v8M20 9v8" stroke="#d8f0ff" strokeWidth="1.200" />
      </Ico>
    ),
  },
  {
    label: "Logix Designer",
    active: true,
    icon: (
      <Ico w={26} h={30}>
        <path d="M19 7l-4 16" stroke="#8a8a8a" strokeWidth="6" />
        <circle cx="16" cy="7" r="4.500" fill="#555" stroke="#aaa" strokeWidth="2" />
        <circle cx="10" cy="20" r="7.500" fill="#555" stroke="#b0b0b0" strokeWidth="2" />
        <circle cx="10" cy="20" r="3.500" fill="#333" stroke="#e5e5e5" strokeWidth="2" />
        <circle cx="16" cy="6" r="1.500" fill="#eee" />
      </Ico>
    ),
  },
];

const Taskbar = () => (
  <footer className={clsx(UI, "flex h-[50px] shrink-0 items-center bg-[#0e0e0e] text-white")}>
    <button type="button" aria-label="Start" className="flex w-[60px] justify-center">
      <Ico w={20} h={20}>
        <path d="M0 3l9-1v7.500H0zM10 1.900L20 .5v9H10zM0 10.500h9V18l-9-1zM10 10.500h10v9l-10-1.400z" fill="#fff" />
      </Ico>
    </button>
    <button type="button" aria-label="Search" className="flex w-[60px] justify-center">
      <Ico w={20} h={20}>
        <circle cx="12.500" cy="7.500" r="6.500" stroke="#fff" strokeWidth="1.500" />
        <path d="M8 12l-8 8" stroke="#fff" strokeWidth="1.500" />
      </Ico>
    </button>
    <div className="ml-[2px] flex self-stretch">
      {APPS.map((a) => (
        <button
          key={a.label}
          type="button"
          aria-label={a.label}
          className={clsx(
            "flex items-center justify-center border-b-3",
            a.active ? "w-[61px] bg-[#3e3e3e] pr-1" : a.running ? "mx-[5px] w-[52px] pr-[2px]" : "w-16",
            a.running || a.active ? "border-[#76b9ed]" : "border-transparent"
          )}
        >
          {a.icon}
        </button>
      ))}
    </div>
    <div className="ml-auto flex items-center pr-[5px]">
      <span className="text-[14px] text-[#d8d8d8]">Programs</span>
      <span className="mb-8 ml-[10px] text-[18px] leading-6">»</span>
      <button type="button" aria-label="Show hidden icons" className="ml-3">
        <Ico w={17} h={10}><path d="M1 9l7.500-8L16 9" stroke="#fff" strokeWidth="1.300" /></Ico>
      </button>
      <Ico w={21} h={17} className="ml-[11px]">
        <path d="M5 2.500h15v10H3.500V7M12 13v3M8 15.500h8" stroke="#fff" />
        <path d="M.5 1.500h4v4h-4z" stroke="#fff" />
      </Ico>
      <Ico w={22} h={18} className="ml-2">
        <path d="M1 5.500h3l4-4v13l-4-4H1z" stroke="#fff" />
        <circle cx="16" cy="12" r="5.500" fill="#d9252f" />
        <path d="M14 10l4 4M18 10l-4 4" stroke="#fff" strokeWidth="1.500" />
      </Ico>
      <div className="ml-[11px] w-[70px] text-center text-[14px] leading-[22px]">
        <div>5:14 PM</div>
        <div>5/30/2025</div>
      </div>
      <div className="relative ml-[22px]">
        <Ico w={30} h={30}>
          <path d="M0 1h20v16h-8v5l-5-5H0z" fill="#fff" />
          <path d="M4 5.500h12M4 9h12M4 12.500h8" stroke="#111" strokeWidth="1.500" />
          <circle cx="19.500" cy="20" r="9.500" fill="#333" stroke="#999" />
        </Ico>
        <span className="absolute left-4 top-[11px] text-[13px] leading-[18px]">1</span>
      </div>
      <div className="ml-[15px] h-[50px] w-px bg-[#555]" />
    </div>
  </footer>
);

export default function App() {
  return (
    <div className="flex min-h-screen flex-col overflow-hidden bg-[#293955]">
      <div className="shrink-0 bg-[#d5dbe9] pb-px">
        <TitleBar />
        <MenuBar />
        <ToolBar />
        <div className="mt-[5px] flex h-[72px] gap-[2px]">
          <OnlineBar />
          <InstructionBar />
        </div>
      </div>
      <main className="flex flex-1 gap-[6px]">
        <Organizer />
        <div className="flex min-w-0 flex-1 flex-col">
          <DocTabs />
          <TrendToolbar />
          <TrendView />
          <ErrorsPanel />
        </div>
      </main>
      <DockedTabs />
      <StatusBar />
      <Taskbar />
    </div>
  );
}
